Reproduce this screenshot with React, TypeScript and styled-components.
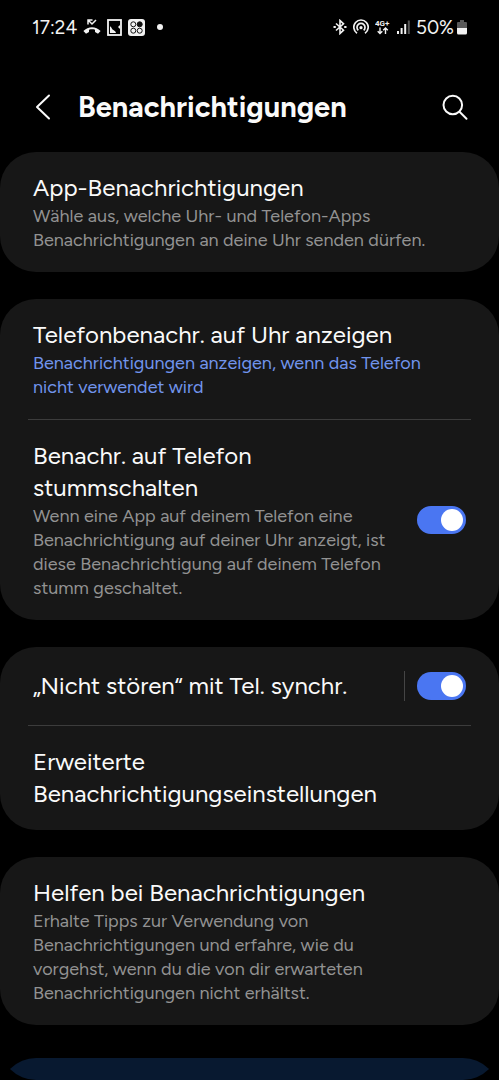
import React from "react";
import styled, { createGlobalStyle } from "styled-components";

const GlobalStyle = createGlobalStyle`
  * { box-sizing: border-box; }
  html, body { margin: 0; background: #000; }
  body { font-family: Figtree, Inter, Roboto, "Liberation Sans", sans-serif; color: #fafafa; }
  h1, h2, p { margin: 0; }
`;

const Screen = styled.div`
  height: 100vh;
  display: flex;
  flex-direction: column;
  overflow: hidden;
  border-radius: 0 0 36px 36px;
  background: #000;
`;

const StatusBar = styled.div`
  flex: none;
  height: 54px;
  padding: 0 32px;
  display: flex;
  align-items: center;
  justify-content: space-between;
  font-size: 19px;
  color: #f2f2f2;
`;

const StatusGroup = styled.div<{ $gap: number }>`
  display: flex;
  align-items: center;
  gap: ${(p) => p.$gap}px;
  svg { display: block; flex: none; }
`;

const Header = styled.header`
  flex: none;
  height: 98px;
  padding: 8px 28px 0 32px;
  display: flex;
  align-items: center;
`;

const IconButton = styled.button`
  border: 0;
  padding: 0;
  background: none;
  color: #fafafa;
  display: flex;
  flex: none;
  cursor: pointer;
`;

const PageTitle = styled.h1`
  flex: 1;
  padding-left: 22px;
  font-size: 29px;
  line-height: 36px;
  font-weight: 700;
`;

const List = styled.main`
  flex: none;
  display: flex;
  flex-direction: column;
  gap: 27px;
`;

const Card = styled.section`
  background: #171717;
  border-radius: 36px;
`;

const Row = styled.div`
  min-height: 78px;
  padding: 20px 33px;
  display: flex;
  align-items: center;
  justify-content: space-between;
`;

const RowText = styled.div`
  flex: 1;
  min-width: 0;
  max-width: 400px;
`;

const RowTitle = styled.h2`
  display: block;
  font-size: 24px;
  line-height: 32px;
  font-weight: 400;
`;

const RowNote = styled.p<{ $accent?: boolean }>`
  font-size: 18px;
  line-height: 24px;
  color: ${(p) => (p.$accent ? "#7194ec" : "#929292")};
`;

const Divider = styled.hr`
  height: 1px;
  margin: 0 28px;
  border: 0;
  background: #3c3c3c;
`;

const SwitchSlot = styled.div<{ $separated?: boolean }>`
  flex: none;
  height: 30px;
  padding-left: 12px;
  display: flex;
  align-items: center;
  border-left: 1px solid ${(p) => (p.$separated ? "#454545" : "transparent")};
`;

const Switch = styled.input`
  appearance: none;
  width: 49px;
  height: 28px;
  margin: 0;
  padding: 3px;
  border-radius: 14px;
  background: #555;
  display: flex;
  cursor: pointer;
  &::before {
    content: "";
    width: 22px;
    height: 22px;
    border-radius: 50%;
    background: #fff;
  }
  &:checked {
    background: #4a76f2;
    justify-content: flex-end;
  }
`;

const TipCard = styled.section`
  flex: none;
  height: 120px;
  margin-top: 33px;
  border-radius: 36px;
  background: #081930;
`;

const MissedCall = () => (
  <svg width="18" height="16" viewBox="0 0 18 16" fill="none" stroke="currentColor">
    <path d="M5 5.500V1h4.500M5.300 1.300 9 5l4-4" strokeWidth="1.500" />
    <path d="M.4 12.100C5 6.900 13 6.900 17.600 12.100L15 14.800l-3-1.700v-2.300c-2-.6-4-.6-6 0v2.300l-3 1.700z" fill="currentColor" stroke="none" />
  </svg>
);

const ScreenIcon = () => (
  <svg width="15" height="17" viewBox="0 0 15 17">
    <rect x="1" y="1" width="13" height="15" fill="none" stroke="currentColor" strokeWidth="1.800" />
    <path d="M3 7.500c1.500 0 1.500 2 2.500 3s3 1 3.500 3.500H3zM13 6v4l-2-2z" fill="currentColor" />
  </svg>
);

const AppGrid = () => (
  <svg width="17" height="17" viewBox="0 0 17 17">
    <rect width="17" height="17" rx="3" fill="currentColor" />
    <g fill="none" stroke="#111" strokeWidth="1">
      <circle cx="5.300" cy="5.300" r="2.500" />
      <circle cx="5.300" cy="11.700" r="2.500" />
      <circle cx="11.700" cy="11.700" r="2.500" />
      <circle cx="11.700" cy="5.300" r="2.500" fill="#111" />
    </g>
  </svg>
);

const Bluetooth = () => (
  <svg width="14" height="16" viewBox="0 0 14 16" fill="none" stroke="currentColor" strokeWidth="1.600">
    <path d="m3 4.500 7.500 6.700L7 14.500v-13l3.500 3.300L3 11.500" />
    <path d="M.5 8h2.300M11.200 8h2.300" strokeWidth="2" />
  </svg>
);

const Hotspot = () => (
  <svg width="16" height="16" viewBox="0 0 16 16" fill="none" stroke="currentColor" strokeWidth="1.700">
    <path d="M4 14.200a7.200 7.200 0 1 1 8 0" />
    <path d="M5.300 11.300a4 4 0 1 1 5.400 0" />
    <circle cx="8" cy="8.700" r="1.600" fill="currentColor" stroke="none" />
  </svg>
);

const Network = () => (
  <svg width="16" height="16" viewBox="0 0 16 16" fill="none" stroke="currentColor" strokeWidth="1.400">
    <text x="0" y="6.500" fontSize="8" fontWeight="700" fontFamily="Roboto, sans-serif" fill="currentColor" stroke="none">4G+</text>
    <path d="M5 8.500v6M2.700 12.200 5 14.500l2.300-2.300M10.500 15V9M8.200 11.300 10.500 9l2.300 2.300" />
  </svg>
);

const Signal = () => (
  <svg width="13" height="14" viewBox="0 0 13 14" fill="currentColor">
    <rect x="0" y="11" width="2" height="3" />
    <rect x="3.600" y="8" width="2" height="6" />
    <rect x="7.200" y="4" width="2" height="10" />
    <rect x="10.800" y="0.500" width="2" height="13.500" fill="#555" />
  </svg>
);

const Battery = () => (
  <svg width="10" height="15" viewBox="0 0 10 15">
    <path d="M3 0h4v2h2a1 1 0 0 1 1 1v5H0V3a1 1 0 0 1 1-1h2z" fill="#5a5a5a" />
    <path d="M0 8h10v5a1.500 1.500 0 0 1-1.500 1.500h-7A1.500 1.500 0 0 1 0 13z" fill="currentColor" />
  </svg>
);

const Dot = styled.span`
  width: 6px;
  height: 6px;
  margin-left: 6px;
  border-radius: 50%;
  background: currentColor;
`;

export default function App() {
  return (
    <Screen>
      <GlobalStyle />
      <StatusBar>
        <StatusGroup $gap={6}>
          <span>17:24</span>
          <MissedCall />
          <ScreenIcon />
          <AppGrid />
          <Dot />
        </StatusGroup>
        <StatusGroup $gap={6}>
          <Bluetooth />
          <Hotspot />
          <Network />
          <Signal />
          <StatusGroup $gap={3}>
            <span>50%</span>
            <Battery />
          </StatusGroup>
        </StatusGroup>
      </StatusBar>
      <Header>
        <IconButton aria-label="Zurück">
          <svg width="24" height="28" viewBox="0 0 24 28" fill="none" stroke="currentColor" strokeWidth="2" strokeLinecap="round" strokeLinejoin="round">
            <path d="M17 2.500 5 14l12 11.500" />
          </svg>
        </IconButton>
        <PageTitle>Benachrichtigungen</PageTitle>
        <IconButton aria-label="Suchen">
          <svg width="30" height="30" viewBox="0 0 30 30" fill="none" stroke="currentColor" strokeWidth="2" strokeLinecap="round">
            <circle cx="11.800" cy="13" r="9.300" />
            <path d="m18.500 19.700 7 7" />
          </svg>
        </IconButton>
      </Header>
      <List>
        <Card>
          <Row>
            <RowText>
              <RowTitle>App-Benachrichtigungen</RowTitle>
              <RowNote>Wähle aus, welche Uhr- und Telefon-Apps Benachrichtigungen an deine Uhr senden dürfen.</RowNote>
            </RowText>
          </Row>
        </Card>
        <Card>
          <Row>
            <RowText>
              <RowTitle>Telefonbenachr. auf Uhr anzeigen</RowTitle>
              <RowNote $accent>Benachrichtigungen anzeigen, wenn das Telefon nicht verwendet wird</RowNote>
            </RowText>
          </Row>
          <Divider />
          <Row>
            <RowText>
              <RowTitle as="label" htmlFor="mute">Benachr. auf Telefon stummschalten</RowTitle>
              <RowNote>Wenn eine App auf deinem Telefon eine Benachrichtigung auf deiner Uhr anzeigt, ist diese Benachrichtigung auf deinem Telefon stumm geschaltet.</RowNote>
            </RowText>
            <SwitchSlot>
              <Switch id="mute" type="checkbox" role="switch" defaultChecked />
            </SwitchSlot>
          </Row>
        </Card>
        <Card>
          <Row>
            <RowText>
              <RowTitle as="label" htmlFor="dnd">„Nicht stören“ mit Tel. synchr.</RowTitle>
            </RowText>
            <SwitchSlot $separated>
              <Switch id="dnd" type="checkbox" role="switch" defaultChecked />
            </SwitchSlot>
          </Row>
          <Divider />
          <Row>
            <RowText>
              <RowTitle>Erweiterte Benachrichtigungseinstellungen</RowTitle>
            </RowText>
          </Row>
        </Card>
        <Card>
          <Row>
            <RowText>
              <RowTitle>Helfen bei Benachrichtigungen</RowTitle>
              <RowNote>Erhalte Tipps zur Verwendung von Benachrichtigungen und erfahre, wie du vorgehst, wenn du die von dir erwarteten Benachrichtigungen nicht erhältst.</RowNote>
            </RowText>
          </Row>
        </Card>
      </List>
      <TipCard />
    </Screen>
  );
}
